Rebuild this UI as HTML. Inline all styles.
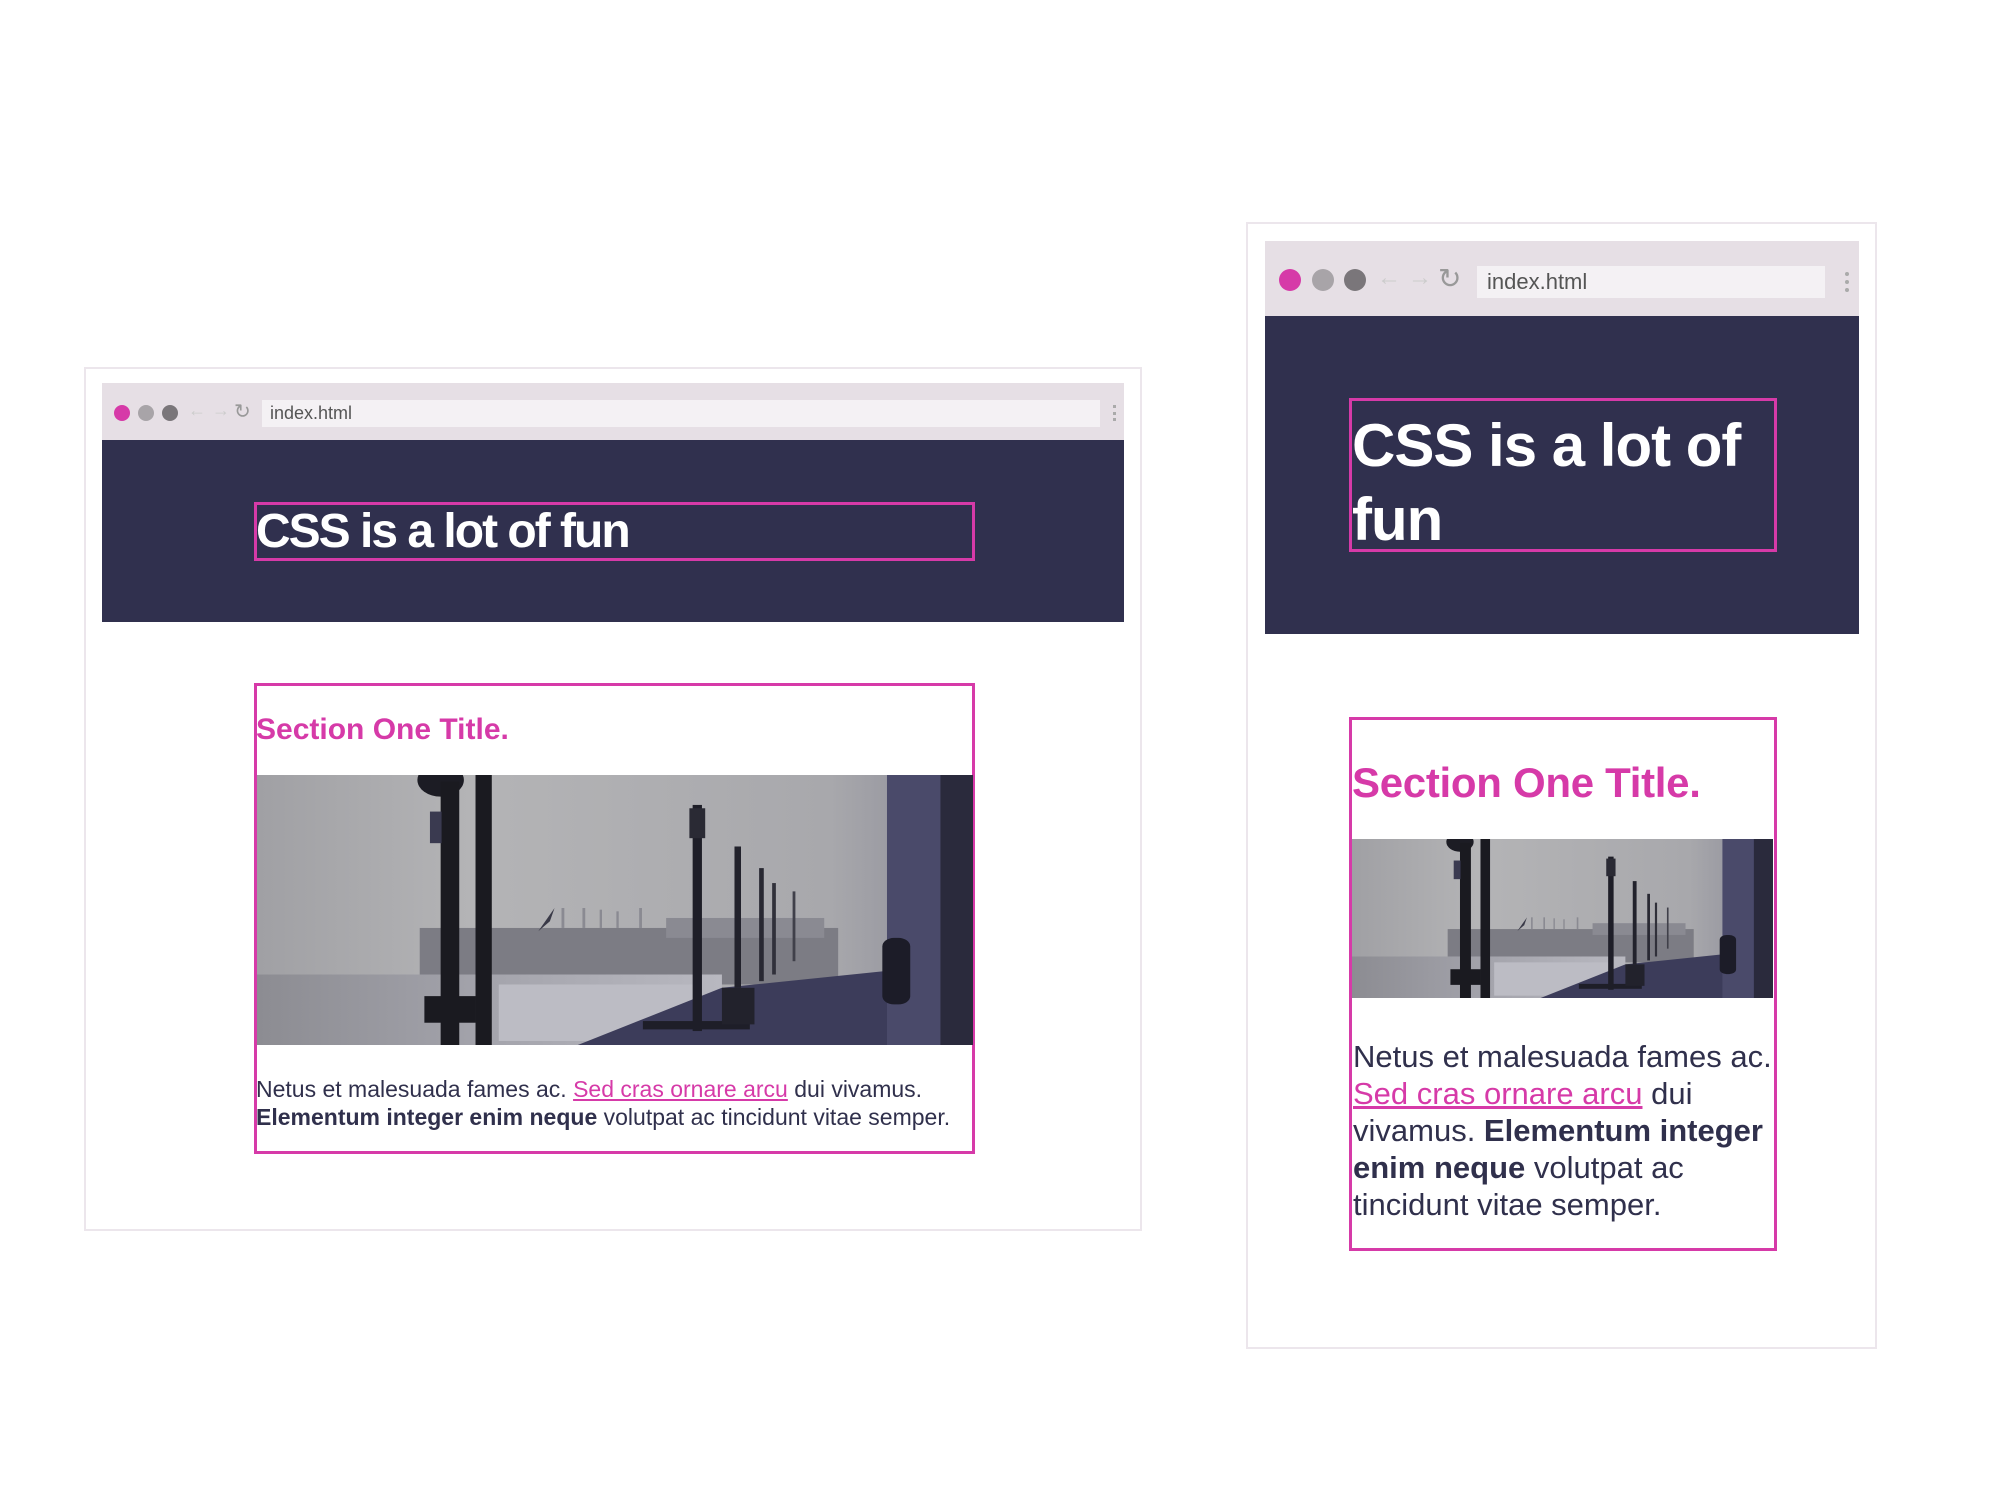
<!DOCTYPE html>
<html><head><meta charset="utf-8"><style>
*{margin:0;padding:0;box-sizing:border-box}
body{width:2000px;height:1500px;background:#fff;position:relative;overflow:hidden;font-family:"Liberation Sans",Arial,sans-serif}
.a{position:absolute}
.frame{border:2px solid #ece6ec;background:#fff}
.tb{background:#e6dfe5}
.dot{border-radius:50%}
.url{background:#f4f1f4;color:#555;font-size:18px}
.dark{background:#30304e}
.box{border:3px solid #d63aa8}
.h1{color:#fff;font-weight:bold;white-space:nowrap}
.t{color:#d63aa8;font-weight:bold;white-space:nowrap}
.p{color:#30304c;white-space:nowrap}
.p a{color:#d63aa8;text-decoration:underline}
.p b{font-weight:bold}
svg{display:block}
</style></head><body>
<svg width="0" height="0" style="position:absolute"><defs>
<linearGradient id="sky" x1="0" y1="0" x2="1" y2="0"><stop offset="0" stop-color="#a0a0a4"/><stop offset=".3" stop-color="#b4b4b6"/><stop offset=".8" stop-color="#a8a8ac"/><stop offset="1" stop-color="#8a8a96"/></linearGradient>
<linearGradient id="wat" x1="0" y1="0" x2="1" y2="0"><stop offset="0" stop-color="#8c8c92"/><stop offset=".5" stop-color="#a4a4ac"/><stop offset="1" stop-color="#b8b8c0"/></linearGradient>
<symbol id="img" viewBox="0 0 1540 812" preserveAspectRatio="none">
<rect width="1540" height="812" fill="url(#sky)"/>
<rect x="350" y="460" width="900" height="170" fill="#7c7c84"/>
<rect x="880" y="430" width="340" height="60" fill="#8a8a92"/>
<g fill="#8a8a92"><rect x="655" y="400" width="6" height="60"/><rect x="700" y="400" width="6" height="60"/><rect x="737" y="405" width="5" height="55"/><rect x="773" y="410" width="5" height="50"/><rect x="822" y="400" width="6" height="60"/></g>
<path d="M605 470 L640 400 L630 440 Z" fill="#3a3a48"/>
<rect x="0" y="600" width="1000" height="212" fill="url(#wat)"/>
<rect x="520" y="630" width="420" height="170" fill="#bcbcc4"/>
<polygon points="690,812 1000,640 1350,590 1540,580 1540,812" fill="#3c3c5a"/>
<rect x="1355" y="0" width="185" height="812" fill="#4a4a6a"/>
<rect x="1470" y="0" width="70" height="812" fill="#2a2a3c"/>
<circle cx="395" cy="15" r="50" fill="#1c1c24"/>
<rect x="395" y="20" width="40" height="792" fill="#1a1a20"/>
<rect x="470" y="0" width="35" height="812" fill="#1a1a20"/>
<rect x="360" y="665" width="110" height="80" fill="#1a1a20"/>
<rect x="372" y="110" width="25" height="95" fill="#3a3a50"/>
<rect x="937" y="90" width="20" height="680" fill="#1e1e28"/>
<rect x="930" y="100" width="34" height="90" fill="#2a2a34"/>
<rect x="1027" y="215" width="14" height="425" fill="#22222c"/>
<rect x="1080" y="280" width="10" height="340" fill="#282832"/>
<rect x="1108" y="325" width="8" height="275" fill="#30303a"/>
<rect x="1152" y="350" width="6" height="210" fill="#40404a"/>
<rect x="1345" y="490" width="60" height="200" rx="25" fill="#1c1c28"/>
<rect x="830" y="740" width="230" height="25" fill="#1e1e28"/>
<rect x="1000" y="640" width="70" height="110" fill="#22222c"/>
</symbol></defs></svg>

<!-- LEFT -->
<div class="a frame" style="left:84px;top:367px;width:1058px;height:864px"></div>
<div class="a tb" style="left:102px;top:383px;width:1022px;height:57px"></div>
<div class="a dot" style="left:114px;top:405px;width:16px;height:16px;background:#d63aa8"></div>
<div class="a dot" style="left:138px;top:405px;width:16px;height:16px;background:#a8a4a8"></div>
<div class="a dot" style="left:162px;top:405px;width:16px;height:16px;background:#7a767a"></div>
<div class="a" style="left:188px;top:400px;color:#ccc;font-size:18px">&larr;</div>
<div class="a" style="left:212px;top:400px;color:#ccc;font-size:18px">&rarr;</div>
<div class="a" style="left:234px;top:399px;color:#999;font-size:20px">&#8635;</div>
<div class="a url" style="left:262px;top:400px;width:838px;height:27px;padding:3px 8px">index.html</div>
<div class="a" style="left:1113px;top:405px;width:3px;height:16px;border-left:3px dotted #aaa"></div>
<div class="a dark" style="left:102px;top:440px;width:1022px;height:182px"></div>
<div class="a box" style="left:254px;top:502px;width:721px;height:59px"></div>
<div class="a h1" style="left:256px;top:504px;font-size:48px;letter-spacing:-2px;line-height:56px">CSS is a lot of fun</div>
<div class="a box" style="left:254px;top:683px;width:721px;height:471px"></div>
<div class="a t" style="left:256px;top:713px;font-size:30px;line-height:34px;letter-spacing:0px">Section One Title.</div>
<svg class="a" style="left:257px;top:775px" width="716" height="270"><use href="#img" width="716" height="270"/></svg>
<div class="a p" style="left:256px;top:1075px;font-size:23px;line-height:28px">Netus et malesuada fames ac. <a>Sed cras ornare arcu</a> dui vivamus.<br><b>Elementum integer enim neque</b> volutpat ac tincidunt vitae semper.</div>

<!-- RIGHT -->
<div class="a frame" style="left:1246px;top:222px;width:631px;height:1127px"></div>
<div class="a tb" style="left:1265px;top:241px;width:594px;height:75px"></div>
<div class="a dot" style="left:1279px;top:269px;width:22px;height:22px;background:#d63aa8"></div>
<div class="a dot" style="left:1312px;top:269px;width:22px;height:22px;background:#a8a4a8"></div>
<div class="a dot" style="left:1344px;top:269px;width:22px;height:22px;background:#7a767a"></div>
<div class="a" style="left:1377px;top:264px;color:#ccc;font-size:24px">&larr;</div>
<div class="a" style="left:1408px;top:264px;color:#ccc;font-size:24px">&rarr;</div>
<div class="a" style="left:1438px;top:262px;color:#999;font-size:28px">&#8635;</div>
<div class="a url" style="left:1477px;top:266px;width:348px;height:32px;padding:3px 10px;font-size:22px">index.html</div>
<div class="a" style="left:1845px;top:272px;width:4px;height:20px;border-left:4px dotted #aaa"></div>
<div class="a dark" style="left:1265px;top:316px;width:594px;height:318px"></div>
<div class="a box" style="left:1349px;top:398px;width:428px;height:154px"></div>
<div class="a h1" style="left:1352px;top:409px;font-size:60px;letter-spacing:-1px;line-height:74px">CSS is a lot of<br>fun</div>
<div class="a box" style="left:1349px;top:717px;width:428px;height:534px"></div>
<div class="a t" style="left:1352px;top:760px;font-size:42px;line-height:46px;letter-spacing:-0.3px">Section One Title.</div>
<svg class="a" style="left:1352px;top:839px" width="421" height="159"><use href="#img" width="421" height="159"/></svg>
<div class="a p" style="left:1353px;top:1038px;font-size:31px;line-height:37px">Netus et malesuada fames ac.<br><a>Sed cras ornare arcu</a> dui<br>vivamus. <b>Elementum integer</b><br><b>enim neque</b> volutpat ac<br>tincidunt vitae semper.</div>
</body></html>
